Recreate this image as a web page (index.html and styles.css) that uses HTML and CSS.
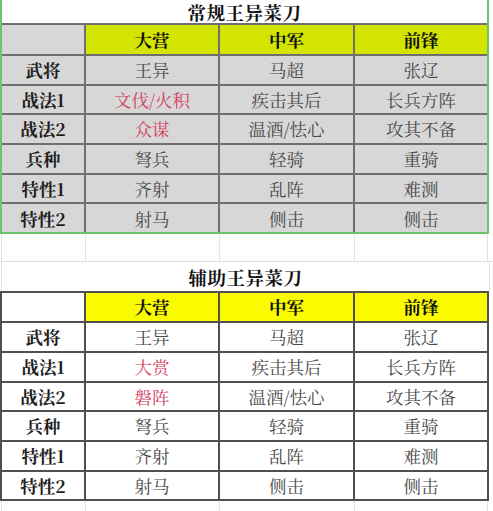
FILE: index.html
```html
<!DOCTYPE html>
<html lang="zh-CN">
<head>
<meta charset="utf-8">
<title>王异菜刀</title>
<link rel="stylesheet" href="styles.css">
</head>
<body>
<div class="page">
  <section class="sel">
    <div class="grid grid-top">
      <div class="title">常规王异菜刀</div>
      <div class="cell blank"></div>
      <div class="cell head">大营</div>
      <div class="cell head">中军</div>
      <div class="cell head">前锋</div>

      <div class="cell label">武将</div>
      <div class="cell">王异</div>
      <div class="cell">马超</div>
      <div class="cell">张辽</div>

      <div class="cell label">战法1</div>
      <div class="cell red">文伐/火积</div>
      <div class="cell">疾击其后</div>
      <div class="cell">长兵方阵</div>

      <div class="cell label">战法2</div>
      <div class="cell red">众谋</div>
      <div class="cell">温酒/怯心</div>
      <div class="cell">攻其不备</div>

      <div class="cell label">兵种</div>
      <div class="cell">弩兵</div>
      <div class="cell">轻骑</div>
      <div class="cell">重骑</div>

      <div class="cell label">特性1</div>
      <div class="cell">齐射</div>
      <div class="cell">乱阵</div>
      <div class="cell">难测</div>

      <div class="cell label">特性2</div>
      <div class="cell">射马</div>
      <div class="cell">侧击</div>
      <div class="cell">侧击</div>
    </div>
  </section>

  <div class="gridline-row">
    <div class="gl"></div><div class="gl"></div><div class="gl"></div><div class="gl"></div>
  </div>

  <div class="title2">辅助王异菜刀</div>

  <div class="grid grid-bottom">
    <div class="cell blank"></div>
    <div class="cell head">大营</div>
    <div class="cell head">中军</div>
    <div class="cell head">前锋</div>

    <div class="cell label">武将</div>
    <div class="cell">王异</div>
    <div class="cell">马超</div>
    <div class="cell">张辽</div>

    <div class="cell label">战法1</div>
    <div class="cell red">大赏</div>
    <div class="cell">疾击其后</div>
    <div class="cell">长兵方阵</div>

    <div class="cell label">战法2</div>
    <div class="cell red">磐阵</div>
    <div class="cell">温酒/怯心</div>
    <div class="cell">攻其不备</div>

    <div class="cell label">兵种</div>
    <div class="cell">弩兵</div>
    <div class="cell">轻骑</div>
    <div class="cell">重骑</div>

    <div class="cell label">特性1</div>
    <div class="cell">齐射</div>
    <div class="cell">乱阵</div>
    <div class="cell">难测</div>

    <div class="cell label">特性2</div>
    <div class="cell">射马</div>
    <div class="cell">侧击</div>
    <div class="cell">侧击</div>
  </div>

  <div class="gridline-row tail">
    <div class="gl"></div><div class="gl"></div><div class="gl"></div><div class="gl"></div>
  </div>
</div>
</body>
</html>
```

FILE: styles.css
```css
html, body {
  margin: 0;
  padding: 0;
  background: #ffffff;
}

.page {
  width: 493px;
  height: 511px;
  overflow: hidden;
  font-family: "Noto Serif CJK SC", "Noto Sans CJK SC", serif;
  font-size: 17.5px;
  color: #4a4a4a;
}

.sel {
  width: 485px;
  border: 2px solid #6cc46c;
  border-top: 0;
}

.grid {
  display: grid;
  grid-template-columns: 82px 132px 133px 132px;
  gap: 2px;
}

.grid-top {
  background: #6f6f6f;
  grid-template-rows: 23px 29px repeat(6, 27.7px);
}

.grid-bottom {
  width: 485px;
  background: #505050;
  border: 2px solid #505050;
  grid-template-rows: 28px repeat(6, 27.7px);
}

.title {
  grid-column: 1 / -1;
  background: #ffffff;
  color: #111111;
  font-weight: 700;
  font-size: 18.5px;
  display: flex;
  align-items: center;
  justify-content: center;
  letter-spacing: 0.5px;
}

.title2 {
  width: 487px;
  height: 29px;
  margin-left: 1px;
  border-left: 1px solid #e2e2e2;
  border-right: 1px solid #e2e2e2;
  color: #111111;
  font-weight: 700;
  font-size: 18.5px;
  display: flex;
  align-items: center;
  justify-content: center;
  letter-spacing: 0.5px;
}

.cell {
  display: flex;
  align-items: center;
  justify-content: center;
  white-space: nowrap;
  line-height: 1;
}

.grid-top .cell {
  background: #d7d7d7;
}

.grid-bottom .cell {
  background: #ffffff;
}

.grid-top .cell.head {
  background: #d3e400;
}

.grid-bottom .cell.head {
  background: #fbfb00;
}

.cell.head {
  color: #111111;
  font-weight: 700;
}

.cell.label {
  color: #1e1e1e;
  font-weight: 700;
}

.cell.red {
  color: #d4415f;
}

.gridline-row {
  display: grid;
  grid-template-columns: 84px 134px 135px 134px;
  height: 27px;
  margin-left: 1px;
  border-bottom: 1px solid #dedede;
}

.gridline-row.tail {
  border-bottom: 0;
  height: 12px;
}

.gl {
  border-left: 1px solid #e4e4e4;
}

.gl:last-child {
  border-right: 1px solid #e4e4e4;
}
```
